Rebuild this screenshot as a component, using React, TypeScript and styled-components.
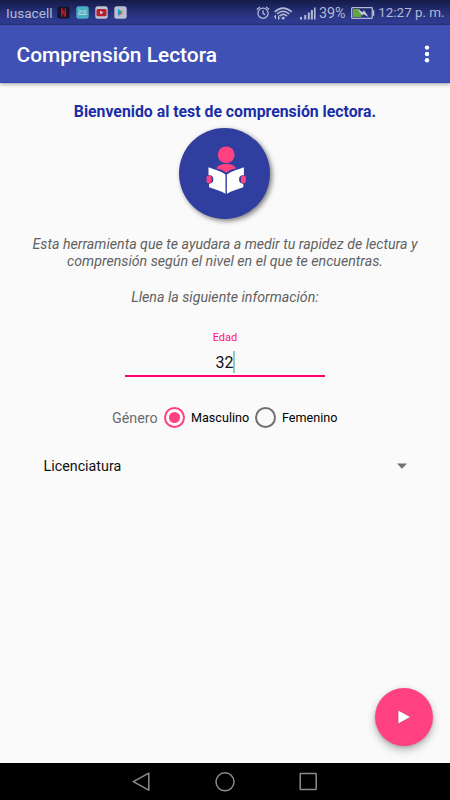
import React from 'react';
import styled, { createGlobalStyle } from 'styled-components';

const GlobalStyle = createGlobalStyle`
  *, *::before, *::after { box-sizing: border-box; }
  body { margin: 0; background: #fafafa; }
  svg { display: block; flex: none; }
  button { border: 0; padding: 0; background: none; font: inherit; color: inherit; }
`;

const Screen = styled.div`
  position: relative;
  width: 450px;
  height: 800px;
  display: flex;
  flex-direction: column;
  overflow: hidden;
  background: #fafafa;
  color: #111;
  font-family: Roboto, 'Liberation Sans', sans-serif;
`;

const StatusBar = styled.header`
  height: 25px;
  flex: none;
  display: flex;
  justify-content: space-between;
  padding: 0 5px 0 6px;
  background: linear-gradient(#151b46 0%, #1f2866 30%, #2a3684 65%, #2f3c93 92%, #2a3478 100%);
  color: #b4b9d8;
`;

const StatusGroup = styled.div`
  display: flex;
  align-items: center;
  height: 26px;
`;

const StatusIcons = styled.div<{ $gap: number }>`
  display: flex;
  align-items: center;
  gap: ${(p) => p.$gap}px;
  margin-right: 3px;
`;

const StatusText = styled.span<{ $width: number; $size: number; $gap?: number }>`
  width: ${(p) => p.$width}px;
  margin-right: ${(p) => p.$gap ?? 0}px;
  font-size: ${(p) => p.$size}px;
  line-height: 26px;
  white-space: nowrap;
`;

const Badges = styled.div`
  display: flex;
  gap: 6px;
  padding-bottom: 2px;
`;

const AppBar = styled.div`
  z-index: 1;
  height: 58px;
  flex: none;
  display: flex;
  align-items: center;
  justify-content: space-between;
  padding: 0 20px 0 16.5px;
  background: #3f51b5;
  border-bottom: 1px solid #2c45b4;
  box-shadow: 0 1px 4px rgba(0, 0, 0, 0.4);
`;

const Title = styled.h1`
  margin: 0;
  padding-top: 3px;
  color: #fff;
  font-size: 20.9px;
  font-weight: 500;
  line-height: 28px;
  white-space: nowrap;
`;

const MenuButton = styled.button`
  width: 6px;
`;

const Content = styled.main`
  flex: 1;
  display: flex;
  flex-direction: column;
  align-items: center;
  padding-top: 19px;
`;

const Welcome = styled.h2`
  margin: 0;
  color: #1a2ea8;
  font-size: 15.8px;
  font-weight: 700;
  line-height: 20px;
  white-space: nowrap;
`;

const Logo = styled.div`
  width: 91px;
  height: 91px;
  margin: 6px 0.5px 0 0;
  border-radius: 50%;
  background: #303f9f;
  box-shadow: 2px 2px 5px rgba(0, 0, 0, 0.5);
`;

const Info = styled.p<{ $top: number }>`
  margin: ${(p) => p.$top}px 0 0;
  color: #616161;
  font-size: 14.2px;
  font-style: italic;
  line-height: 17px;
  text-align: center;
  white-space: nowrap;
`;

const AgeField = styled.label`
  width: 200px;
  margin-top: 25px;
  display: flex;
  flex-direction: column;
  align-items: center;
  border-bottom: 2px solid #ff0070;
`;

const AgeLabel = styled.span`
  color: #ff1478;
  font-size: 11px;
  line-height: 13px;
`;

const AgeValue = styled.span`
  height: 22px;
  margin: 7px 0 2px 1px;
  border-right: 2px solid #8dcdc9;
  font-size: 16px;
  line-height: 24px;
`;

const GenderRow = styled.div`
  height: 22px;
  margin-top: 29px;
  display: flex;
  align-items: center;
`;

const GenderLabel = styled.span`
  width: 52px;
  padding-top: 1px;
  color: #6b6b6b;
  font-size: 14.3px;
  white-space: nowrap;
`;

const Radio = styled.span<{ $checked?: boolean }>`
  width: 21px;
  height: 21px;
  flex: none;
  display: grid;
  place-items: center;
  border: 2px solid ${(p) => (p.$checked ? '#ff4081' : '#707070')};
  border-radius: 50%;

  &::after {
    content: '';
    width: 11px;
    height: 11px;
    border-radius: 50%;
    background: ${(p) => (p.$checked ? '#ff4081' : 'transparent')};
  }
`;

const RadioLabel = styled.span<{ $width: number }>`
  width: ${(p) => p.$width}px;
  margin-left: 6px;
  color: #000;
  font-size: 12.6px;
  white-space: nowrap;
`;

const Select = styled.div`
  align-self: stretch;
  height: 22px;
  margin: 27px 42px 0 43.5px;
  display: flex;
  align-items: center;
  justify-content: space-between;
  font-size: 14.3px;
`;

const PlayButton = styled.button`
  position: absolute;
  right: 17px;
  bottom: 54px;
  width: 58px;
  height: 58px;
  display: grid;
  place-items: center;
  border-radius: 50%;
  background: #ff4081;
  box-shadow: 0 4px 8px rgba(0, 0, 0, 0.28), 0 1px 3px rgba(0, 0, 0, 0.14);
`;

const NavBar = styled.nav`
  height: 37px;
  flex: none;
  display: flex;
  justify-content: center;
  align-items: center;
  gap: 64px;
  background: #000;
`;

const NetflixBadge = () => (
  <svg width="13" height="13" viewBox="0 0 13 13">
    <rect x=".5" y=".5" width="12" height="12" rx="2" fill="#11142b" />
    <path d="M4.7 10.7V2.4L8.3 10.7V2.4" fill="none" stroke="#b71729" strokeWidth="1.6" />
  </svg>
);

const AndroidBadge = () => (
  <svg width="13" height="13" viewBox="0 0 13 13">
    <rect x=".3" y=".3" width="12.4" height="12.4" rx="2.5" fill="#49aebe" />
    <path d="M2.5 8.5a4 3.7 0 0 1 8 0ZM4.5 5.2 3.2 3.5M8.5 5.2l1.3-1.7" fill="none" stroke="#b7d8e2" strokeWidth=".9" />
    <path d="M4.6 6.9h1M7.5 6.9h1" stroke="#d8eaf0" />
  </svg>
);

const VideoBadge = () => (
  <svg width="13" height="13" viewBox="0 0 13 13">
    <rect x=".3" y=".3" width="12.4" height="12.4" rx="2.5" fill="#c1c2d3" />
    <rect x="1.5" y="3" width="10" height="7.3" rx="1.5" fill="#b4202d" />
    <path d="m5.2 4.8 3.2 1.8-3.2 1.8Z" fill="#e1d0dc" />
  </svg>
);

const StoreBadge = () => (
  <svg width="13" height="13" viewBox="0 0 13 13">
    <rect x=".3" y=".3" width="12.4" height="12.4" rx="2.5" fill="#b9bed2" />
    <path d="M4 3v7l3-3.5Z" fill="#149bc9" />
    <path d="m4 3 5 2.8-2 .9Z" fill="#26a875" />
    <path d="m9.7 6.5-2.2 1.2L6.7 6.5l.8-1Z" fill="#d6ad37" />
    <path d="m4 10 3-3.5 1.2 1.1Z" fill="#c93e58" />
  </svg>
);

const AlarmIcon = () => (
  <svg width="14" height="14" viewBox="0 0 14 14" fill="none" stroke="#b4b9d8" strokeWidth="1.3">
    <circle cx="7" cy="7.2" r="5.1" />
    <path d="M.8 3.6 4 .9M10 .9 13.2 3.6M7 4.3v3.1l2.2 1.3" />
  </svg>
);

const WifiIcon = () => (
  <svg width="20" height="15" viewBox="0 0 20 15" fill="none" stroke="#b4b9d8">
    <path d="M1.7 5.8Q10-1.7 18.8 5.8M4 8q6-5.5 12.4 0M6.5 10.1q3.8-3.4 7.6 0" strokeWidth="1.6" />
    <circle cx="10.2" cy="12.2" r="1.4" fill="#b4b9d8" stroke="none" />
    <path d="M2.5 9v4M5.5 9.5v4" strokeWidth="1" />
    <path d="M.5 11.2 2.5 9v2.2ZM7.5 11.6l-2 2.2v-2.2Z" fill="#b4b9d8" stroke="none" />
  </svg>
);

const SignalIcon = () => (
  <svg width="16" height="13" viewBox="0 0 16 13" fill="#b4b9d8">
    <path d="M0 10h2v2.5H0ZM4.2 8h2v4.5h-2ZM7.8 5.5h2v7h-2ZM10.9 3h2v9.5h-2ZM14 .5h1.6v12H14Z" />
  </svg>
);

const BatteryIcon = () => (
  <svg width="24" height="12" viewBox="0 0 24 12">
    <rect x=".7" y=".7" width="20.6" height="10.6" rx=".8" fill="none" stroke="#b4b9d8" strokeWidth="1.3" />
    <path d="M22 3.3h1.3v5.4H22Z" fill="#b4b9d8" />
    <path d="M2 2h6.5l2 8H2Z" fill="#61a83b" />
    <path d="m6.5 2.3 5.4 3 1-2.2 4.7 7-5.5-3.2-1 1.8Z" fill="#c5cae0" />
  </svg>
);

const MoreIcon = () => (
  <svg width="6" height="18" viewBox="0 0 6 18" fill="#fff">
    <circle cx="3" cy="2.6" r="2.2" />
    <circle cx="3" cy="9" r="2.2" />
    <circle cx="3" cy="15.3" r="2.2" />
  </svg>
);

const ReaderIcon = () => (
  <svg width="91" height="91" viewBox="-0.5 0 91 91">
    <circle cx="46.7" cy="26.8" r="8.4" fill="#ff4081" />
    <path d="M36.7 40.5c1.7-3.4 6-4.4 10-4.4s8.3 1 10 4.4c-4.3.6-7.6 1.9-10 4.2-2.4-2.3-5.7-3.6-10-4.2Z" fill="#ff4081" />
    <path d="M29 39.2c6.5 2.4 12.5 4 17 7.2v19.4c-4.8-3.1-10.4-4.4-16.4-6.5v-3.6c3.4-.2 4.2-1.8 4.2-4.4s-1-4.2-4.8-4.4Z" fill="#fff" />
    <path d="M64.4 39.2c-6.5 2.4-12.5 4-17 7.2v19.4c4.8-3.1 10.4-4.4 16.4-6.5v-3.6c-3.4-.2-4.2-1.8-4.2-4.4s1-4.2 4.8-4.4Z" fill="#fff" />
    <rect x="27" y="47.4" width="5" height="7.8" rx="2.2" fill="#ff4081" />
    <rect x="61.4" y="47.4" width="5" height="7.8" rx="2.2" fill="#ff4081" />
  </svg>
);

const DropdownArrow = () => (
  <svg width="12" height="6" viewBox="0 0 12 6">
    <path d="M1 .5h10L6 5.7Z" fill="#707070" />
  </svg>
);

const PlayIcon = () => (
  <svg width="16" height="18" viewBox="0 0 16 18">
    <path d="M2 2v14l12.7-7Z" fill="#fff" stroke="#c64474" strokeWidth=".7" />
  </svg>
);

const BackIcon = () => (
  <svg width="20" height="20" viewBox="0 0 20 20" fill="none" stroke="#8c8c8c" strokeWidth="1.5">
    <path d="M17.8 1.2v17L2.3 9.7Z" strokeLinejoin="round" />
  </svg>
);

const HomeIcon = () => (
  <svg width="20" height="20" viewBox="0 0 20 20" fill="none" stroke="#8c8c8c" strokeWidth="1.5">
    <circle cx="10" cy="9.8" r="9" />
  </svg>
);

const RecentIcon = () => (
  <svg width="20" height="20" viewBox="0 0 20 20" fill="none" stroke="#8c8c8c" strokeWidth="1.5">
    <rect x="1.2" y="1.5" width="16" height="16" rx=".6" />
  </svg>
);

export default function App() {
  return (
    <>
      <GlobalStyle />
      <Screen>
        <StatusBar>
          <StatusGroup>
            <StatusText $width={51} $size={13.6}>Iusacell</StatusText>
            <Badges>
              <NetflixBadge />
              <AndroidBadge />
              <VideoBadge />
              <StoreBadge />
            </Badges>
          </StatusGroup>
          <StatusGroup>
            <StatusIcons $gap={4}>
              <StatusIcons $gap={3}>
                <AlarmIcon />
                <WifiIcon />
              </StatusIcons>
              <SignalIcon />
            </StatusIcons>
            <StatusText $width={28} $size={14.3} $gap={4}>39%</StatusText>
            <BatteryIcon />
            <StatusText $width={70} $size={13.4}>&nbsp;12:27 p. m.</StatusText>
          </StatusGroup>
        </StatusBar>
        <AppBar>
          <Title>Comprensión Lectora</Title>
          <MenuButton aria-label="Más opciones"><MoreIcon /></MenuButton>
        </AppBar>
        <Content>
          <Welcome>Bienvenido al test de comprensión lectora.</Welcome>
          <Logo><ReaderIcon /></Logo>
          <Info $top={17}>
            Esta herramienta que te ayudara a medir tu rapidez de lectura y<br />
            comprensión según el nivel en el que te encuentras.
          </Info>
          <Info $top={19}>Llena la siguiente información:</Info>
          <AgeField>
            <AgeLabel>Edad</AgeLabel>
            <AgeValue>32</AgeValue>
          </AgeField>
          <GenderRow role="radiogroup">
            <GenderLabel>Género</GenderLabel>
            <Radio $checked />
            <RadioLabel $width={64}>Masculino</RadioLabel>
            <Radio />
            <RadioLabel $width={56}>Femenino</RadioLabel>
          </GenderRow>
          <Select>
            <span>Licenciatura</span>
            <DropdownArrow />
          </Select>
        </Content>
        <PlayButton aria-label="Iniciar"><PlayIcon /></PlayButton>
        <NavBar>
          <BackIcon />
          <HomeIcon />
          <RecentIcon />
        </NavBar>
      </Screen>
    </>
  );
}
